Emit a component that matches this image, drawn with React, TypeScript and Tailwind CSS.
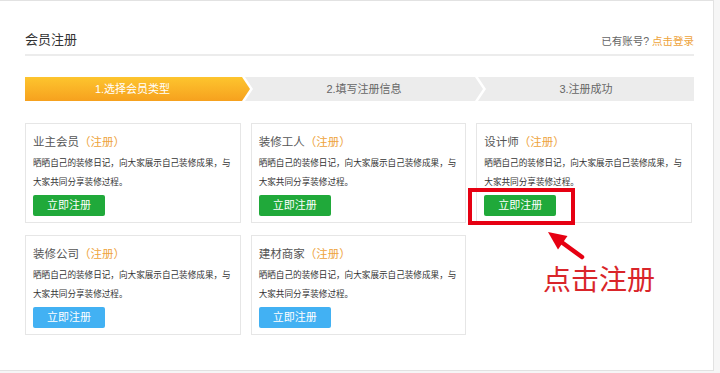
import clsx from "clsx";

const font = "font-['Liberation_Sans','Noto_Sans_CJK_SC',sans-serif]";

const members = [
  { name: "业主会员", tone: "green" },
  { name: "装修工人", tone: "green" },
  { name: "设计师", tone: "green" },
  { name: "装修公司", tone: "blue" },
  { name: "建材商家", tone: "blue" },
];

function MemberCard({ name, tone }: { name: string; tone: string }) {
  return (
    <div className="h-[100px] border border-[#e6e6e6] bg-white px-[7px] pt-[8px]">
      <h3 className="text-[11.5px] leading-[20px] text-[#555]">
        {name}
        <span className="text-[#eea33b]">（注册）</span>
      </h3>
      <p className="mt-[2px] text-[8.6px] leading-[19px] text-[#333]">
        晒晒自己的装修日记，向大家展示自己装修成果，与
        <br />
        大家共同分享装修过程。
      </p>
      <button
        className={clsx(
          "mt-[3px] flex h-[21px] w-[72px] items-center justify-center rounded-[2px] text-[11px] text-white",
          tone === "green" ? "bg-[#20a93a]" : "bg-[#42b1f3]"
        )}
      >
        立即注册
      </button>
    </div>
  );
}

export default function App() {
  return (
    <div className={clsx("relative h-[373px] w-[720px] bg-[#f6f6f6]", font)}>
      <div className="h-[371px] w-[714px] border-t border-r border-b border-[#e2e2e2] bg-white pl-[25px] pr-[19px]">
        {/* header */}
        <div className="flex items-end justify-between border-b-2 border-[#ececec] pt-[31px] pb-[6px]">
          <h2 className="text-[13px] leading-[16px] text-[#333]">会员注册</h2>
          <p className="text-[10.5px] leading-[14px] text-[#666]">
            已有账号? <span className="text-[#eea33b]">点击登录</span>
          </p>
        </div>

        {/* steps */}
        <div className="mt-[21px] flex h-[24px] text-[11px]">
          <div className="flex w-[225px] items-center justify-center bg-linear-to-b from-[#fdc52e] to-[#f6a11e] pr-[10px] text-white [clip-path:polygon(0_0,calc(100%_-_8px)_0,100%_50%,calc(100%_-_8px)_100%,0_100%)]">
            1.选择会员类型
          </div>
          <div className="-ml-[5px] flex w-[238px] items-center justify-center bg-[#ececec] text-[#666] [clip-path:polygon(0_0,calc(100%_-_8px)_0,100%_50%,calc(100%_-_8px)_100%,0_100%,8px_50%)]">
            2.填写注册信息
          </div>
          <div className="-ml-[5px] flex flex-1 items-center justify-center bg-[#ececec] text-[#666] [clip-path:polygon(0_0,100%_0,100%_100%,0_100%,8px_50%)]">
            3.注册成功
          </div>
        </div>

        {/* member types */}
        <div className="mt-[22px] grid w-[667px] grid-cols-3 gap-x-[10px] gap-y-[12px]">
          {members.map((m) => (
            <MemberCard key={m.name} name={m.name} tone={m.tone} />
          ))}
        </div>
      </div>

      {/* annotation */}
      <div className="absolute left-[468px] top-[188px] h-[37px] w-[107px] border-4 border-[#e60012]" />
      <svg className="absolute left-[540px] top-[226px]" width="50" height="36" viewBox="0 0 50 36">
        <line x1="20" y1="15" x2="42" y2="31" stroke="#e60012" strokeWidth="4.5" strokeLinecap="round" />
        <polygon points="8,6 27.5,10 18,23.5" fill="#e60012" />
      </svg>
      <div className="absolute left-[543px] top-[264px] font-['Noto_Sans_CJK_SC',sans-serif] text-[28px] leading-[28px] text-[#d9252a]">
        点击注册
      </div>
    </div>
  );
}
